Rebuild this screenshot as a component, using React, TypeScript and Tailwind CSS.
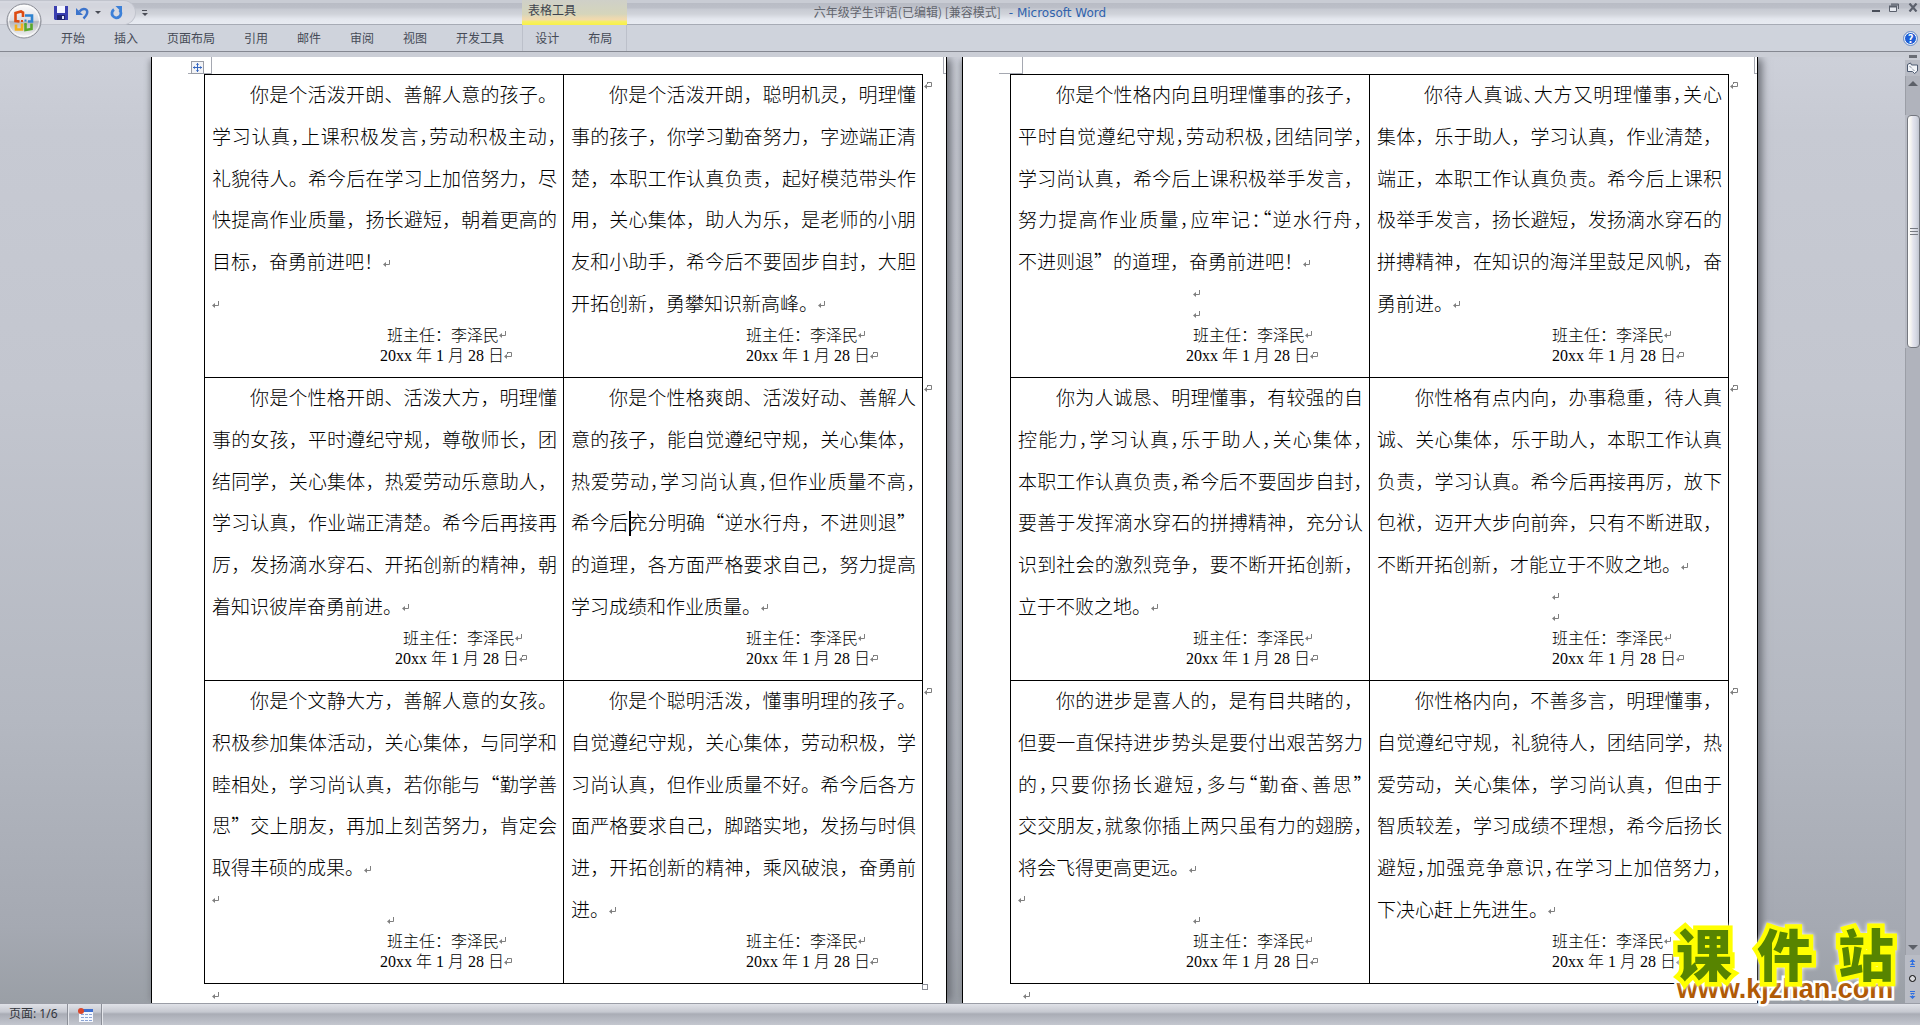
import type { ReactNode } from "react";

const tabs = ["开始", "插入", "页面布局", "引用", "邮件", "审阅", "视图", "开发工具"];
const tableTabs = ["设计", "布局"];

interface Comment {
  lines: string[];
  // where the empty paragraphs under the text stand
  blanks?: ("line" | "left" | "right")[];
  // indent of the signature block
  sign: "even" | "hang" | "far";
  wideIndent?: boolean;
}

// Page 1
const pageOne: Comment[][] = [
  [
    {
      lines: [
        "你是个活泼开朗、善解人意的孩子。",
        "学习认真，上课积极发言，劳动积极主动，",
        "礼貌待人。希今后在学习上加倍努力，尽",
        "快提高作业质量，扬长避短，朝着更高的",
        "目标，奋勇前进吧！",
      ],
      blanks: ["line"],
      sign: "hang",
    },
    {
      lines: [
        "你是个活泼开朗，聪明机灵，明理懂",
        "事的孩子，你学习勤奋努力，字迹端正清",
        "楚，本职工作认真负责，起好模范带头作",
        "用，关心集体，助人为乐，是老师的小朋",
        "友和小助手，希今后不要固步自封，大胆",
        "开拓创新，勇攀知识新高峰。",
      ],
      sign: "even",
    },
  ],
  [
    {
      lines: [
        "你是个性格开朗、活泼大方，明理懂",
        "事的女孩，平时遵纪守规，尊敬师长，团",
        "结同学，关心集体，热爱劳动乐意助人，",
        "学习认真，作业端正清楚。希今后再接再",
        "厉，发扬滴水穿石、开拓创新的精神，朝",
        "着知识彼岸奋勇前进。",
      ],
      sign: "far",
    },
    {
      lines: [
        "你是个性格爽朗、活泼好动、善解人",
        "意的孩子，能自觉遵纪守规，关心集体，",
        "热爱劳动，学习尚认真，但作业质量不高，",
        "希今后|充分明确“逆水行舟，不进则退”",
        "的道理，各方面严格要求自己，努力提高",
        "学习成绩和作业质量。",
      ],
      sign: "even",
    },
  ],
  [
    {
      lines: [
        "你是个文静大方，善解人意的女孩。",
        "积极参加集体活动，关心集体，与同学和",
        "睦相处，学习尚认真，若你能与“勤学善",
        "思”交上朋友，再加上刻苦努力，肯定会",
        "取得丰硕的成果。",
      ],
      blanks: ["left", "right"],
      sign: "hang",
    },
    {
      lines: [
        "你是个聪明活泼，懂事明理的孩子。",
        "自觉遵纪守规，关心集体，劳动积极，学",
        "习尚认真，但作业质量不好。希今后各方",
        "面严格要求自己，脚踏实地，发扬与时俱",
        "进，开拓创新的精神，乘风破浪，奋勇前",
        "进。",
      ],
      sign: "even",
    },
  ],
];

// Page 2
const pageTwo: Comment[][] = [
  [
    {
      lines: [
        "你是个性格内向且明理懂事的孩子，",
        "平时自觉遵纪守规，劳动积极，团结同学，",
        "学习尚认真，希今后上课积极举手发言，",
        "努力提高作业质量，应牢记：“逆水行舟，",
        "不进则退”的道理，奋勇前进吧！",
      ],
      blanks: ["right", "right"],
      sign: "hang",
    },
    {
      lines: [
        "你待人真诚、大方又明理懂事，关心",
        "集体，乐于助人，学习认真，作业清楚，",
        "端正，本职工作认真负责。希今后上课积",
        "极举手发言，扬长避短，发扬滴水穿石的",
        "拼搏精神，在知识的海洋里鼓足风帆，奋",
        "勇前进。",
      ],
      sign: "even",
      wideIndent: true,
    },
  ],
  [
    {
      lines: [
        "你为人诚恳、明理懂事，有较强的自",
        "控能力，学习认真，乐于助人，关心集体，",
        "本职工作认真负责，希今后不要固步自封，",
        "要善于发挥滴水穿石的拼搏精神，充分认",
        "识到社会的激烈竞争，要不断开拓创新，",
        "立于不败之地。",
      ],
      sign: "hang",
    },
    {
      lines: [
        "你性格有点内向，办事稳重，待人真",
        "诚、关心集体，乐于助人，本职工作认真",
        "负责，学习认真。希今后再接再厉，放下",
        "包袱，迈开大步向前奔，只有不断进取，",
        "不断开拓创新，才能立于不败之地。",
      ],
      blanks: ["right", "right"],
      sign: "even",
    },
  ],
  [
    {
      lines: [
        "你的进步是喜人的，是有目共睹的，",
        "但要一直保持进步势头是要付出艰苦努力",
        "的，只要你扬长避短，多与“勤奋、善思”",
        "交交朋友，就象你插上两只虽有力的翅膀，",
        "将会飞得更高更远。",
      ],
      blanks: ["left", "right"],
      sign: "hang",
    },
    {
      lines: [
        "你性格内向，不善多言，明理懂事，",
        "自觉遵纪守规，礼貌待人，团结同学，热",
        "爱劳动，关心集体，学习尚认真，但由于",
        "智质较差，学习成绩不理想，希今后扬长",
        "避短，加强竞争意识，在学习上加倍努力，",
        "下决心赶上先进生。",
      ],
      sign: "even",
    },
  ],
];

const nameIndent = { even: "pl-[175px]", hang: "pl-[175px]", far: "pl-[191px]" };
const dateIndent = { even: "pl-[175px]", hang: "pl-[168px]", far: "pl-[183px]" };

// Paragraph mark
function Mark() {
  return (
    <svg className="w-[7px] h-[7px] shrink-0" viewBox="0 0 7 7" fill="none" stroke="#7f7f7f">
      <path d="M6.500 0v4.500H1" />
      <path d="M0 4.500L3 2v5z" fill="#7f7f7f" stroke="none" />
    </svg>
  );
}

// Cell end mark
function CellMark() {
  return (
    <svg className="w-[8px] h-[8px] shrink-0" viewBox="0 0 8 8" fill="none" stroke="#7f7f7f">
      <path d="M3 .5h4.500v4H2M3.500 0v2" />
      <path d="M0 4.500L3 2v5z" fill="#7f7f7f" stroke="none" />
    </svg>
  );
}

function Line({ text, first, last, wide }: { text: string; first: boolean; last: boolean; wide?: boolean }) {
  const [before, after] = text.split("|");
  // Lines with one character too many use the font's half-width punctuation
  const tight = (first && wide) || (!after && text.length > 18);
  return (
    <p
      className={`row-span-2 flex min-w-0 items-center whitespace-nowrap pb-[3px] text-[19px] leading-9
        ${first ? (wide ? "pl-[47px]" : "pl-[38px]") : ""}
        ${tight ? "[font-feature-settings:'halt']" : ""}`}
    >
      <span className={last ? "" : "min-w-0 grow basis-0 [text-align-last:justify]"}>
        {before}
        {after && (
          <>
            <span className="relative">
              <span className="absolute left-0 top-[3px] w-[2px] h-[25px] bg-black" />
            </span>
            {after}
          </>
        )}
      </span>
      {last && (
        <span className="pt-1">
          <Mark />
        </span>
      )}
    </p>
  );
}

function CommentCell({ comment }: { comment: Comment }) {
  const { lines, blanks = [], sign, wideIndent } = comment;
  return (
    <td className="w-[359px] border border-black p-0 pl-[7px] pr-[6px] align-top">
      <div className="grid h-[292px] grid-cols-1 grid-rows-14">
        {lines.map((text, i) => (
          <Line key={text} text={text} first={i === 0} last={i === lines.length - 1} wide={wideIndent} />
        ))}
        {blanks.map((kind, i) => (
          <p
            key={i}
            className={`flex items-center ${kind === "line" ? "row-span-2" : ""} ${kind === "right" ? nameIndent.even : ""}`}
          >
            <Mark />
          </p>
        ))}
        <p className={`flex items-center whitespace-nowrap pb-[3px] text-base leading-4 ${nameIndent[sign]}`}>
          班主任：李泽民
          <Mark />
        </p>
        <p className={`flex items-center whitespace-nowrap pb-px font-['Liberation_Serif','Noto_Sans_CJK_SC',serif] text-base leading-4 ${dateIndent[sign]}`}>
          20xx 年 1 月 28 日
          <CellMark />
        </p>
      </div>
    </td>
  );
}

interface PageProps {
  rows: Comment[][];
  margin: string;
  endMark: string;
  children?: ReactNode;
}

function Page({ rows, margin, endMark, children }: PageProps) {
  return (
    <article className="w-[796px] shrink-0 border-x border-black bg-white shadow-[6px_0_8px_-2px_#6b6e76,-4px_0_6px_-3px_#85888f]">
      {/* Crop marks */}
      <div className="flex h-[17px] justify-between pl-9">
        <span className="w-6 border-b border-r border-[#a5a8b1]" />
        <span className="w-[3px] border-b border-l border-[#a5a8b1]" />
      </div>
      <div className={`relative ${margin}`}>
        {children}
        <table className="w-[732px] table-fixed border-collapse">
          <tbody>
            {rows.map((row, i) => (
              <tr key={i} className="h-[303px]">
                {row.map((comment) => (
                  <CommentCell key={comment.lines[0]} comment={comment} />
                ))}
                <td className="p-0 pl-px pt-[7px] align-top">
                  <div className="flex">
                    <CellMark />
                  </div>
                </td>
              </tr>
            ))}
          </tbody>
        </table>
        <p className={`flex pt-2 ${endMark}`}>
          <Mark />
        </p>
      </div>
    </article>
  );
}

function OfficeLogo() {
  return (
    <svg className="w-9 h-9" viewBox="0 0 36 36">
      <defs>
        <linearGradient id="orb" x1="0" y1="0" x2="0" y2="1">
          <stop offset="0" stopColor="#fdfdfe" />
          <stop offset=".48" stopColor="#dcdde2" />
          <stop offset=".52" stopColor="#b4b6be" />
          <stop offset="1" stopColor="#fafafa" />
        </linearGradient>
      </defs>
      <circle cx="18" cy="18" r="17" fill="url(#orb)" stroke="#8a8d96" />
      <circle cx="18" cy="18" r="15.500" fill="none" stroke="#fff" opacity=".8" />
      <g fill="none" strokeWidth="2.600">
        <path d="M17 14V9.500L15 8.500 9.500 10v8l4 .5" stroke="#dd4b12" />
        <path d="M19 12.500h7v6h-4" stroke="#2f83cf" />
        <path d="M10 21.500v5h6v-6" stroke="#f2b01c" />
        <path d="M19.500 20.500v6.500l6-1v-5.500" stroke="#58a82c" />
      </g>
      <path d="M15 17h2v2h-2z" fill="#dd4b12" />
      <path d="M18.500 16.500h2v2h-2z" fill="#2f83cf" />
      <path d="M18.500 20h2v2h-2z" fill="#58a82c" />
    </svg>
  );
}

function TitleBar() {
  return (
    <div className="grid h-6 grid-cols-[1fr_auto_1fr] bg-[linear-gradient(#c9ccd4_0,#c9ccd4_3px,#b9bcc5_3px,#bcbfc8_8px,#c7cad2_9px,#d0d3da_14px,#e4e7ee_19px,#e8ebf2_24px)]">
      <div className="flex min-w-0">
        <div className="flex w-[136px] items-center rounded-r-full border border-l-0 border-[#c1c4cd] bg-[#d9dbe2]/80 pl-[54px]">
          <button aria-label="保存">
            <svg className="w-[14px] h-[14px]" viewBox="0 0 14 14">
              <path d="M0 0h14v14H1L0 13z" fill="#3a3fb0" />
              <path d="M3 0h8v7H3z" fill="#f4f6ff" />
              <path d="M3 9h8v5H3z" fill="#20246f" />
              <path d="M8 10h2v3H8z" fill="#dfe4f8" />
            </svg>
          </button>
          <button aria-label="撤消" className="pl-2">
            <svg className="w-[14px] h-[14px]" viewBox="0 0 14 14" fill="none">
              <path d="M3.500 5.500C7 1 12.500 3 11 7.500 10.500 9.500 9 11 7.500 12.500" stroke="#3c74cc" strokeWidth="2.500" />
              <path d="M0 2v7h7z" fill="#3c74cc" />
            </svg>
          </button>
          <span className="ml-[5px] border-x-[3px] border-t-[3px] border-x-transparent border-t-[#4a4d56]" />
          <button aria-label="恢复" className="pl-[9px]">
            <svg className="w-[13px] h-[14px]" viewBox="0 0 13 14" fill="none">
              <path d="M4 3.500A4.500 4.500 0 1 0 9.500 4" stroke="#3c80d8" strokeWidth="2.800" />
              <path d="M5.500 0H12v6.500z" fill="#3c80d8" />
            </svg>
          </button>
        </div>
        <button aria-label="自定义快速访问工具栏" className="w-[17px] pl-[6px]">
          <span className="block w-[5px] border-t border-[#4a4d56]" />
          <span className="mt-[2px] block w-0 border-x-[3px] border-t-[3px] border-x-transparent border-t-[#4a4d56]" />
        </button>
        <span className="ml-[369px] w-[105px] shrink-0 bg-[linear-gradient(#cfd0c8_0,#d5d5bb_14px,#ecd9b0_18px,#f3d9ae_20px,#f5ee6e_21px,#f8f04c_24px)] pl-[6px] text-xs leading-5 text-[#3f434d]">
          表格工具
        </span>
      </div>
      <h1 className="whitespace-nowrap text-xs leading-6 text-[#62656e]">
        六年级学生评语(已编辑) [兼容模式]
        <span className="pl-2 font-['DejaVu_Sans',sans-serif] text-[#2f62ad]">- Microsoft Word</span>
      </h1>
      <div className="flex justify-end gap-[9px] pr-[2px] pt-[3px]">
        <button aria-label="最小化" className="flex h-[9px] items-end">
          <span className="h-[2px] w-2 bg-[#4a4f5a]" />
        </button>
        <button aria-label="还原" className="h-[9px]">
          <svg className="w-[10px] h-[9px]" viewBox="0 0 10 9" fill="none" stroke="#5b606c">
            <path d="M2 1h7.500v5M2 2h7" />
            <path d="M.5 3.500h7v5h-7z" fill="#e6e9f0" />
            <path d="M0 3.500h8" strokeWidth="2" />
          </svg>
        </button>
        <button aria-label="关闭" className="h-[9px]">
          <svg className="w-[10px] h-[9px]" viewBox="0 0 10 9" stroke="#5b606c" strokeWidth="2.200">
            <path d="M1.500.5l7 8M8.500.5l-7 8" />
          </svg>
        </button>
      </div>
    </div>
  );
}

function RibbonTabs() {
  return (
    <nav className="flex h-[27px] items-center border-t border-[#a7abb5] bg-[#cfd3dc] pl-[61px] pr-[3px] text-xs text-[#464b57]">
      <div className="flex gap-[29px]">
        {tabs.map((tab) => (
          <button key={tab}>{tab}</button>
        ))}
      </div>
      <div className="ml-[18px] flex h-full w-[105px] gap-[29px] border-x border-[#bcc0ca] pl-[12px]">
        {tableTabs.map((tab) => (
          <button key={tab}>{tab}</button>
        ))}
      </div>
      <button
        aria-label="帮助"
        className="ml-auto flex h-[13px] w-[13px] items-center justify-center rounded-full border border-white bg-[#1f5fd6] text-[11px] font-bold leading-none text-white outline outline-[#6c8ec9]"
      >
        ?
      </button>
    </nav>
  );
}

function Scrollbar() {
  return (
    <aside className="flex w-[15px] shrink-0 flex-col items-center bg-[#b9bcc5]">
      <div className="flex h-[8px] w-full items-center justify-center bg-[#cbced6]">
        <span className="h-[3px] w-2 bg-[#6a6d75]" />
      </div>
      <button aria-label="标尺" className="flex h-4 items-center">
        <svg className="w-[13px] h-[13px]" viewBox="0 0 13 13" fill="#f2f4f8" stroke="#4d5a70">
          <path d="M1.500 2.500l3-1.500 1 2h6v6l-3 2.500-2-2h-5z" />
          <path d="M3.500 4l5 5" strokeDasharray="1 1" />
        </svg>
      </button>
      <button aria-label="向上" className="flex h-[39px] w-full justify-center border-l border-[#9b9ea6] bg-[#b0b3bc] pt-[5px]">
        <span className="h-0 border-x-[5px] border-b-[5px] border-x-transparent border-b-[#5c6068]" />
      </button>
      <div className="flex h-[233px] w-[13px] shrink-0 flex-col items-center justify-center gap-[2px] self-end rounded-sm border border-[#74777f] bg-[linear-gradient(90deg,#fff_0,#f4f3f0_3px,#e4e4ee_5px,#d6d9e3_8px,#b4b8c4_13px)]">
        <span className="h-px w-2 bg-[#777a82]" />
        <span className="h-px w-2 bg-[#777a82]" />
        <span className="h-px w-2 bg-[#777a82]" />
      </div>
      <button aria-label="向下" className="flex w-full grow items-end justify-center border-l border-[#9b9ea6] bg-[#b0b3bc] pb-[5px]">
        <span className="h-0 border-x-[5px] border-t-[5px] border-x-transparent border-t-[#5c6068]" />
      </button>
      <div className="flex h-12 w-full shrink-0 flex-col items-center justify-around">
        <button aria-label="上一页">
          <svg className="w-[7px] h-2" viewBox="0 0 7 8" fill="#2f6fe0">
            <path d="M3.500 0L6.500 3H.5zM3 2h1v3H3zM3.500 3.500L6 6H1zM1 7h5v1H1z" />
          </svg>
        </button>
        <button aria-label="选择浏览对象" className="h-[7px] w-[7px] rounded-full border border-black bg-[#d8d9dd]" />
        <button aria-label="下一页">
          <svg className="w-[7px] h-2" viewBox="0 0 7 8" fill="#2f6fe0">
            <path d="M1 0h5v1H1zM3.500 4.500L6 2H1zM3 3h1v3H3zM3.500 8L.5 5h6z" />
          </svg>
        </button>
      </div>
    </aside>
  );
}

function StatusBar() {
  return (
    <footer className="flex h-[22px] shrink-0 items-center border-t border-[#9a9da6] bg-[linear-gradient(#e0e2e8_0,#d3d5dc_4px,#c5c8d0_8px,#a9acb5_10px,#b3b6bf_14px,#c6c9d1_22px)] font-['Noto_Sans','Noto_Sans_CJK_SC',sans-serif] text-xs text-[#33363d]">
      <button className="h-full w-[67px] pb-[2px] pl-[9px] text-left">页面: 1/6</button>
      <span className="h-full w-[2px] border-l border-[#8c8f98] bg-[#e4e6eb]" />
      <button aria-label="录制宏" className="flex h-full w-[32px] items-center justify-center">
        <svg className="w-[15px] h-[14px]" viewBox="0 0 15 14">
          <path d="M1 1h14v13H1z" fill="#f5f8ff" />
          <path d="M1 1h14v3H1z" fill="#3f6fd0" />
          <path d="M3 6h3v1H3zM7 6h3v1H7zM11 6h3v1h-3zM3 9h3v1H3zM7 9h3v1H7zM11 9h3v1h-3zM3 12h3v1H3zM7 12h3v1H7zM11 12h3v1h-3z" fill="#8ba4d4" />
          <circle cx="3" cy="3" r="3" fill="#d9452a" />
        </svg>
      </button>
      <span className="h-full w-[2px] border-l border-[#8c8f98] bg-[#e4e6eb]" />
    </footer>
  );
}

export default function App() {
  return (
    <div className="relative flex h-screen flex-col overflow-hidden bg-[#cbced6] font-['Noto_Sans_CJK_SC',sans-serif] text-black" lang="zh-CN">
      <header className="shrink-0 border-b border-[#858891]">
        <TitleBar />
        <RibbonTabs />
      </header>
      <button aria-label="Office 按钮" className="absolute left-[6px] top-[3px]">
        <OfficeLogo />
      </button>

      <div className="flex min-h-0 grow">
        <main className="flex min-w-0 grow overflow-hidden pt-[5px] font-light">
          <div className="flex grow justify-center gap-[15px] overflow-hidden bg-[linear-gradient(#cdd0d9_0,#c7cad3_8%,#c3c6cf_35%,#b4b8c1_70%,#a5a9b2_92%,#9a9fa6_100%)] pl-1">
            <Page rows={pageOne} margin="pl-[52px]" endMark="pl-2">
              <span className="absolute -top-[13px] left-[39px] flex h-[13px] w-[13px] items-center justify-center border border-[#9a9da6] bg-[#f2f3f6]">
                <svg className="w-[9px] h-[9px]" viewBox="0 0 9 9" stroke="#3566c0" fill="#3566c0">
                  <path d="M4.500 0v9M0 4.500h9" />
                  <path d="M4.500 0l1.500 2H3zM4.500 9L3 7h3zM0 4.500L2 3v3zM9 4.500L7 6V3z" stroke="none" />
                </svg>
              </span>
              <span className="absolute left-[770px] top-[910px] h-[6px] w-[6px] border border-[#8a8d96] bg-white" />
            </Page>
            <Page rows={pageTwo} margin="pl-[47px]" endMark="pl-[13px]" />
          </div>
        </main>
        <Scrollbar />
      </div>
      <StatusBar />

      {/* Site watermark */}
      <a href="#kjzhan" className="absolute bottom-6 right-[22px] w-[226px] font-bold">
        <span className="flex justify-between px-1 text-[56px] font-black leading-[50px] text-[#578400] [-webkit-text-stroke:9px_#ffff00] [paint-order:stroke] drop-shadow-[0_0_2px_#fff]">
          <span>课</span>
          <span>件</span>
          <span>站</span>
        </span>
        <span className="block text-center font-['Liberation_Sans',sans-serif] text-[27px] leading-6 text-[#b05a06] [-webkit-text-stroke:5px_#ffffff] [paint-order:stroke]">
          www.kjzhan.com
        </span>
      </a>
    </div>
  );
}
